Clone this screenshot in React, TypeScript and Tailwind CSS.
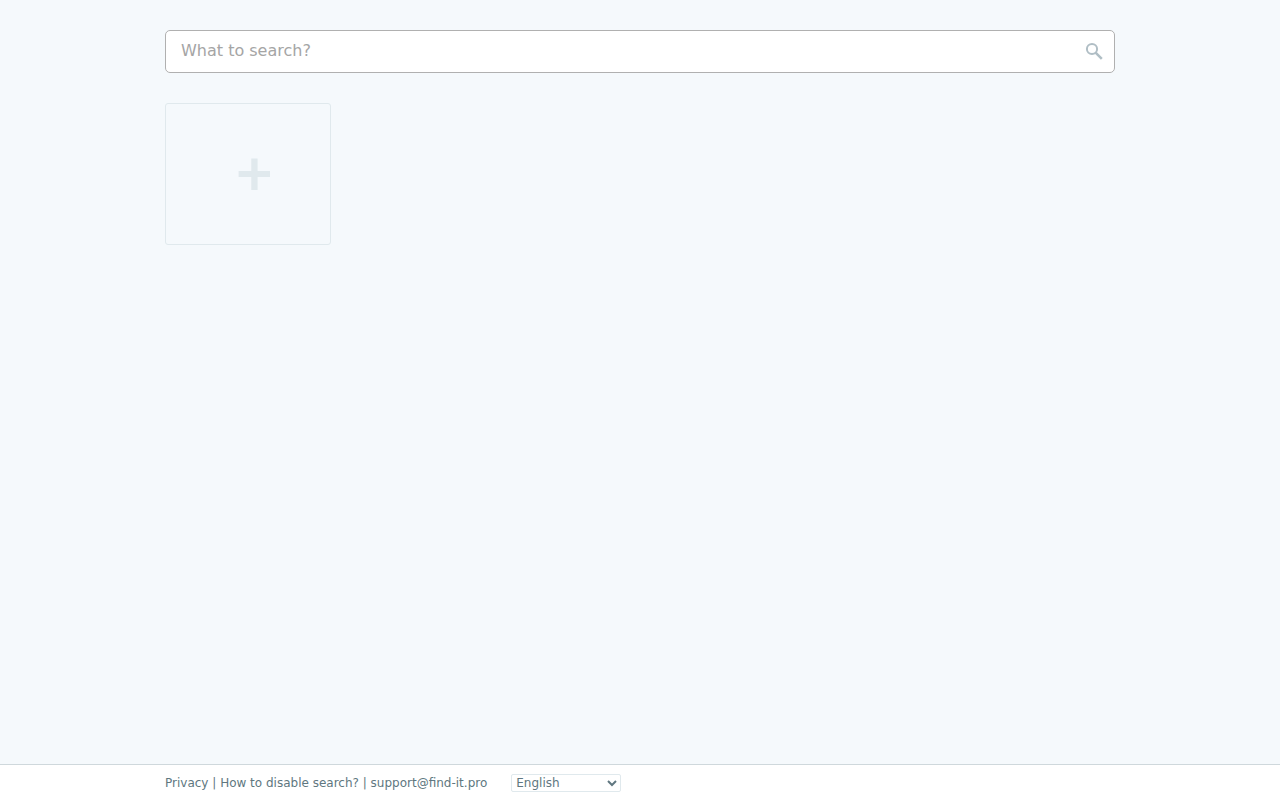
import React from 'react';

const footerLinks = [
  { label: 'Privacy', href: '#privacy' },
  { label: 'How to disable search?', href: '#disable' },
  { label: 'support@find-it.pro', href: 'mailto:support@find-it.pro' },
];

const languages = ['English', 'Deutsch', 'Español', 'Français', 'Русский'];

const SearchBar: React.FC = () => (
  <form
    role="search"
    onSubmit={(e) => e.preventDefault()}
    className="flex h-[43px] items-center rounded-[5px] border border-[#b0b0b0] bg-white pr-2"
  >
    <input
      type="text"
      aria-label="What to search?"
      placeholder="What to search?"
      className="h-full min-w-0 flex-1 bg-transparent px-[15px] pb-[3px] text-base text-[#546e7a] outline-none placeholder:text-[#a5a5a5]"
    />
    <button type="submit" aria-label="Search" className="flex h-full w-6 items-center justify-center pb-px text-[#b0bec5]">
      <svg viewBox="0 0 18 18" className="h-[18px] w-[18px]" fill="none" stroke="currentColor" aria-hidden="true">
        <circle cx="7" cy="7" r="5.1" strokeWidth="2" />
        <path d="M10.6 10.6l6.2 6.2" strokeWidth="2.5" />
      </svg>
    </button>
  </form>
);

const AddTile: React.FC = () => (
  <button
    type="button"
    aria-label="Add site"
    className="flex h-[142px] w-[166px] items-center justify-center rounded-[3px] border border-[#e0e9ed] pl-3 text-[#e0e9ed]"
  >
    <svg viewBox="0 0 32 32" className="h-8 w-8" fill="currentColor" aria-hidden="true">
      <path d="M13.3.4h6.3V13H32v6H19.6v12.9h-6.3V19H.6v-6h12.7z" />
    </svg>
  </button>
);

const Footer: React.FC = () => (
  <footer className="border-t border-[#cfd8dc] bg-white">
    <div className="mx-auto flex h-[35px] w-full max-w-[950px] items-center gap-6 text-xs text-[#607780]">
      <nav className="whitespace-pre">
        {footerLinks.map((link, idx) => (
          <React.Fragment key={link.label}>
            {idx > 0 && ' | '}
            <a href={link.href}>{link.label}</a>
          </React.Fragment>
        ))}
      </nav>
      <select
        aria-label="Language"
        defaultValue="English"
        className="h-[18px] w-[110px] rounded-[2px] border border-[#e0e9ed] bg-white text-xs text-[#607780]"
      >
        {languages.map((lang) => (
          <option key={lang}>{lang}</option>
        ))}
      </select>
    </div>
  </footer>
);

export default function App() {
  return (
    <div className="flex min-h-screen flex-col bg-[#f5f9fc] font-['DejaVu_Sans',sans-serif]">
      <main className="mx-auto flex w-full max-w-[950px] flex-1 flex-col gap-[30px] pt-[30px]">
        <SearchBar />
        <div className="flex flex-wrap gap-[30px]">
          <AddTile />
        </div>
      </main>
      <Footer />
    </div>
  );
}
